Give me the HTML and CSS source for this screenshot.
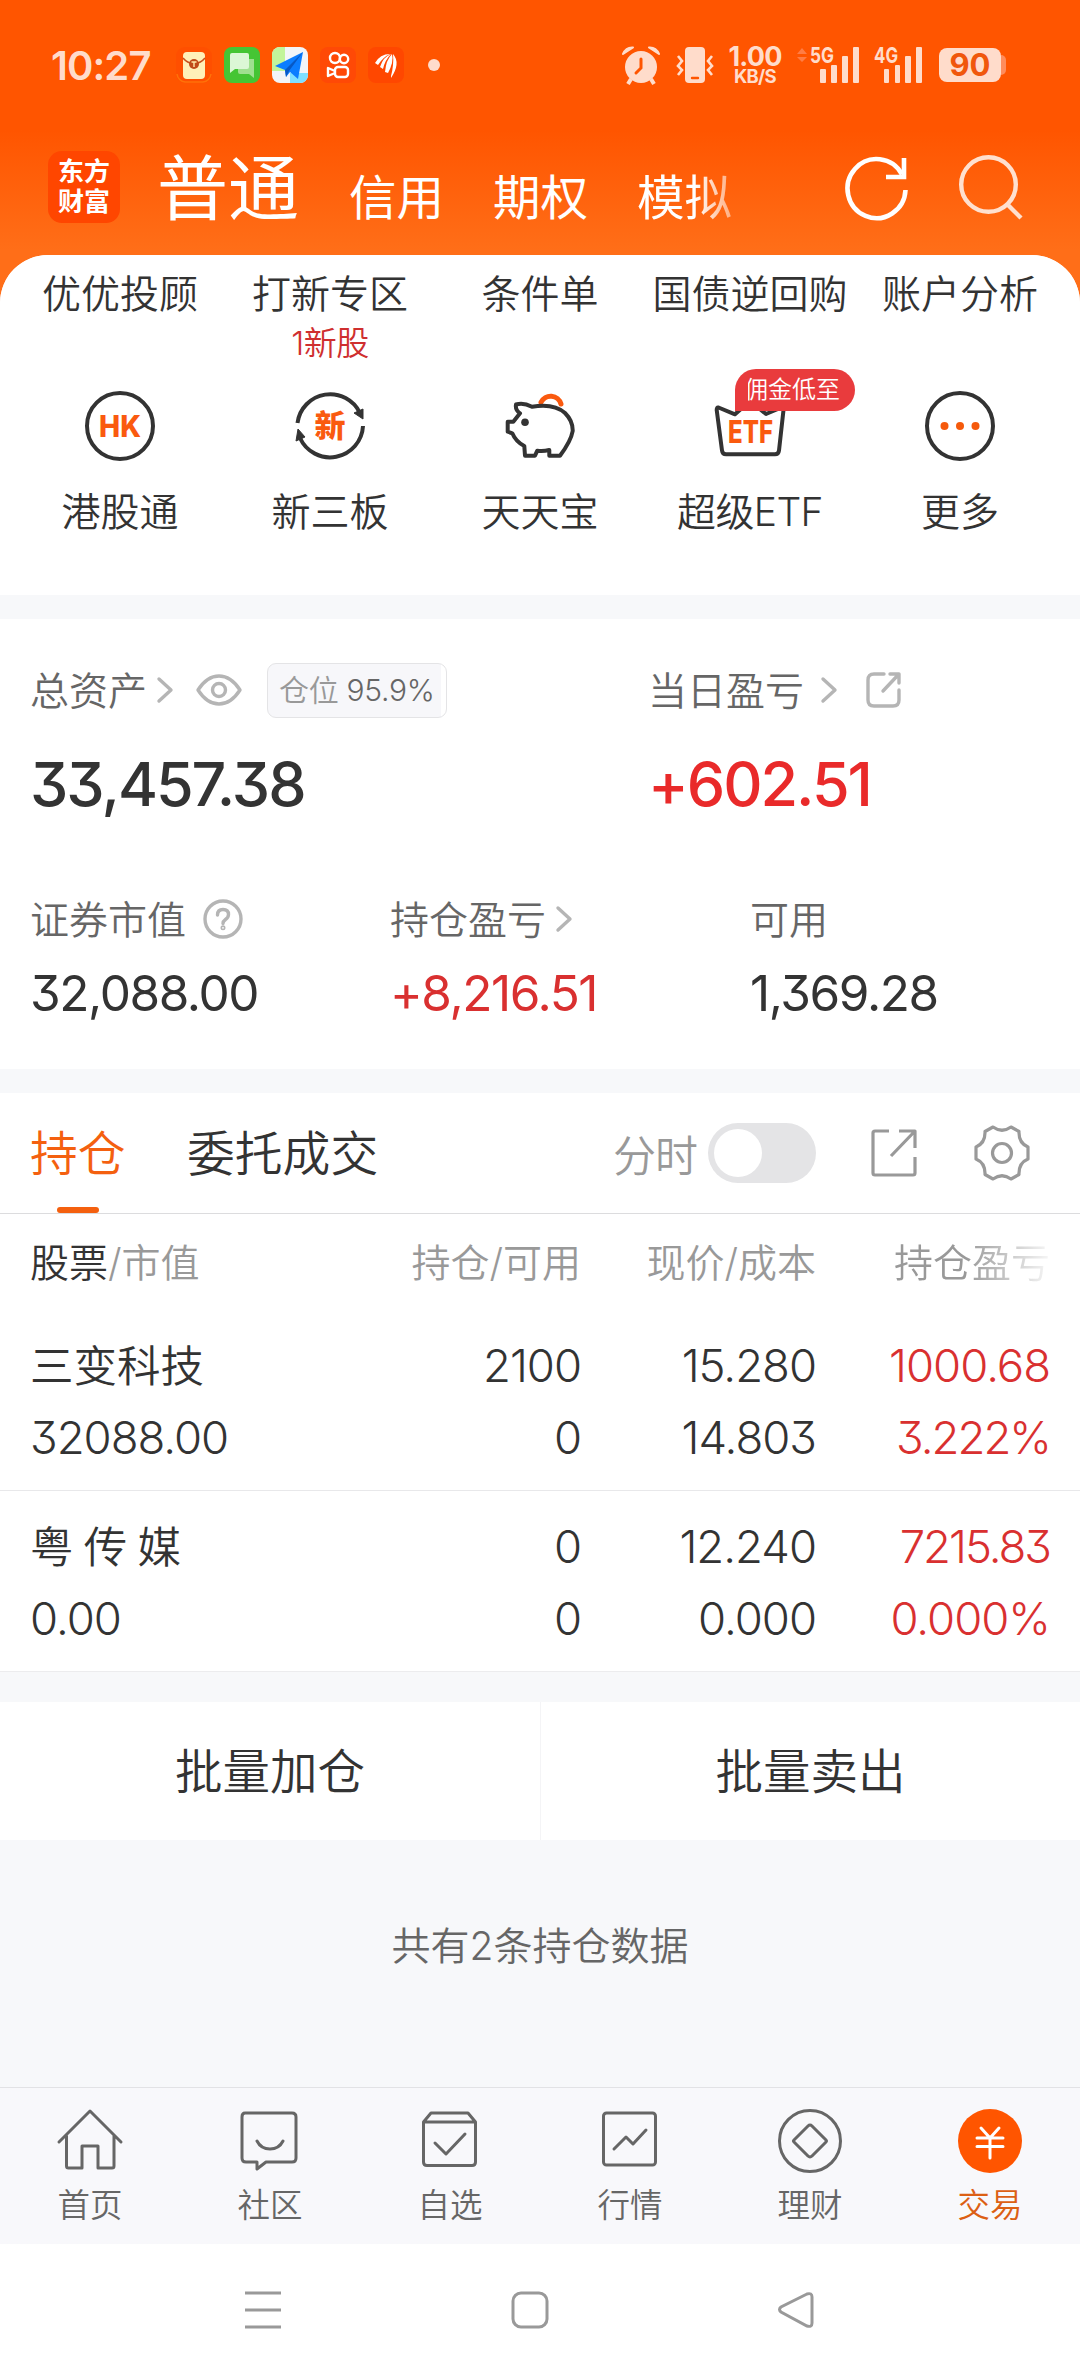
FILE: index.html
```html
<!DOCTYPE html>
<html lang="zh-CN">
<head>
<meta charset="utf-8">
<title>交易</title>
<link rel="stylesheet" href="styles.css">
</head>
<body>
<div class="screen">
  <header class="top">
    <div class="status">
      <span class="clock">10:27</span>
      <div class="apps">
        <svg width="36" height="36" viewBox="0 0 36 36"><rect width="36" height="36" rx="9" fill="#ff4f00"/><path d="M1 27a9 9 0 0 0 8 8h18a9 9 0 0 0 8-8" fill="none" stroke="#ff7208" stroke-width="1.5"/><rect x="7" y="5" width="22" height="27" rx="4" fill="#fff0b8"/><path d="M7 11q4 5 11 6 7-1 11-6" fill="none" stroke="#c8501c" stroke-width="1.5"/><circle cx="18" cy="17" r="5" fill="#c04a18"/><path d="M15.5 15h5M18 15v5" stroke="#ffe9a8" stroke-width="1.4"/></svg>
        <svg width="36" height="36" viewBox="0 0 36 36"><rect width="36" height="36" rx="8" fill="#45c534"/><path d="M14 12h16v19l-5-4H16q-2 0-2-2z" fill="#9fe08f"/><path d="M8 6h15q2 0 2 2v12q0 2-2 2H11l-5 4V8q0-2 2-2z" fill="#dcf7d6"/></svg>
        <svg width="36" height="36" viewBox="0 0 36 36"><rect width="36" height="36" rx="8" fill="#f2f5f8"/><path d="M8 0h5v24H0V8a8 8 0 0 1 8-8z" fill="#c2f59b"/><path d="M18 26h18v2a8 8 0 0 1-8 8H18z" fill="#7fe0ff"/><path d="M31 5 3 19l10 4 1 7 4-5 8 7z" fill="#0b7dff"/><path d="M31 5 13 23l1 7 3-6z" fill="#0758c4"/></svg>
        <svg width="36" height="36" viewBox="0 0 36 36"><rect width="36" height="36" rx="8" fill="#ff4906"/><g fill="none" stroke="#fff" stroke-width="2.4" stroke-linejoin="round"><circle cx="15" cy="11" r="5"/><circle cx="24" cy="12" r="4.2"/><rect x="15" y="20" width="13" height="10" rx="3"/><path d="M15 24l-7-3v8l7-3"/></g></svg>
        <svg width="36" height="36" viewBox="0 0 36 36"><rect width="36" height="36" rx="8" fill="#ff4700"/><g fill="#fff"><path d="M7 16q5-9 15-9-7 3-12 11z"/><path d="M12 20q3-10 11-13-6 6-8 15z"/><path d="M17 25q1-12 7-18 2 8-4 19z"/><path d="M23 29q3-11 2-22 8 9-2 24z"/></g></svg>
      </div>
      <span class="dot"></span>
      <div class="signals">
        <svg width="38" height="38" viewBox="0 0 38 38"><g fill="#ffdccb"><circle cx="19" cy="21" r="16"/><path d="M1 8Q4 1 11 1.500z M37 8Q34 1 27 1.500z" stroke="#ffdccb" stroke-width="2" stroke-linejoin="round"/><path d="M9 33l-3 5M29 33l3 5" stroke="#ffdccb" stroke-width="4"/></g><path d="M19 13v9l-5 5" fill="none" stroke="#ff5500" stroke-width="3" stroke-linecap="round"/></svg>
        <svg class="vibrate" width="38" height="38" viewBox="0 0 38 38"><rect x="9" y="1" width="20" height="36" rx="4" fill="#ffdccb"/><path d="M16 32h6" stroke="#ff5500" stroke-width="2.4" stroke-linecap="round"/><path d="M2 10l4 5-4 5 4 4-4 5M36 10l-4 5 4 5-4 4 4 5" fill="none" stroke="#ffdccb" stroke-width="2.6"/></svg>
        <div class="speed"><b>1.00</b><i>KB/S</i></div>
        <svg class="sig5" width="62" height="38" viewBox="0 0 62 38"><path d="M0 8l5-6 5 6zM0 11h10l-5 5z" fill="#ff7d45"/><text x="13" y="17" textLength="24" lengthAdjust="spacingAndGlyphs" class="net">5G</text><g fill="#ffdccb"><rect x="23" y="23" width="6" height="14" rx="1"/><rect x="34" y="19" width="6" height="18" rx="1"/><rect x="45" y="10" width="6" height="27" rx="1"/><rect x="56" y="1" width="6" height="36" rx="1"/></g></svg>
        <svg class="sig4" width="48" height="38" viewBox="0 0 48 38"><text x="0" y="17" textLength="24" lengthAdjust="spacingAndGlyphs" class="net">4G</text><g fill="#ffdccb"><rect x="10" y="23" width="5" height="14" rx="1"/><rect x="21" y="19" width="5" height="18" rx="1"/><rect x="31" y="10" width="6" height="27" rx="1"/><rect x="42" y="1" width="6" height="36" rx="1"/></g></svg>
        <div class="battery">90</div>
      </div>
    </div>
    <div class="accounts">
      <div class="logo"><span>东方</span><span>财富</span></div>
      <span class="acct acct-main">普通</span>
      <span class="acct">信用</span>
      <span class="acct">期权</span>
      <span class="acct acct-fade">模拟</span>
      <svg class="refresh" width="64" height="66" viewBox="0 0 64 66" fill="none" stroke="#fff" stroke-width="4.6"><path d="M60.500 35A29 29.500 0 1 1 57 19.500"/><path d="M59 3v19H41" /></svg>
      <svg class="search" width="64" height="66" viewBox="0 0 64 66" fill="none" stroke="#ffe0cf" stroke-width="4.400"><circle cx="29.500" cy="29.500" r="27.300"/><path d="M48 49l14 14"/></svg>
    </div>
  </header>

  <main class="sheet">
    <section class="tools">
      <div class="tool-label">优优投顾</div><div class="tool-label">打新专区<small>1新股</small></div><div class="tool-label">条件单</div><div class="tool-label">国债逆回购</div><div class="tool-label">账户分析</div>
      <div class="tool"><svg width="72" height="72" viewBox="0 0 72 72"><circle cx="36" cy="36" r="33" class="ink"/><text x="36" y="46.500" textLength="42" lengthAdjust="spacingAndGlyphs" class="glyph" font-size="30">HK</text></svg><span>港股通</span></div>
      <div class="tool"><svg width="72" height="72" viewBox="0 0 72 72"><g class="ink"><path d="M3.500 33A33 33 0 0 1 66 23"/><path d="M69 36A33 33 0 0 1 6 48"/></g><path d="M60 23l9-4v10zM2 51l2-12 7 8z" fill="#333" stroke="#333"/><text x="36" y="47" class="glyph cjk" font-size="31">新</text></svg><span>新三板</span></div>
      <div class="tool"><svg width="72" height="72" viewBox="-1 -1 72 72"><path d="M36 11.300A10.700 10.700 0 0 1 56 13" fill="none" stroke="#fa5a0f" stroke-width="5" stroke-linecap="round"/><path class="ink" d="M11 13.500Q18 11 27 15.700Q49 12 60 22Q68 30 67.700 40Q66 50 55 64.700H44.300V59Q38 60.500 32.300 59.700L30 64.700H20L19.300 55Q11 51 7.300 42.300L2.700 40.700V30.700H8.300L15 22.300Q10 19 11 13.500Z"/><circle cx="20" cy="31.300" r="3.800" fill="#333"/></svg><span>天天宝</span></div>
      <div class="tool"><svg width="72" height="72" viewBox="-1 -1 72 72"><path class="ink" d="M3.500 16.500L20 23.300 35 10 51 23 66.500 16.500Q69 16.500 68.500 19L64 59.500Q63.500 63.300 60 63.300H11Q7.500 63.300 7 59.500L1.700 19Q1.700 16 3.500 16.500Z"/><text x="35.500" y="51.500" textLength="45" lengthAdjust="spacingAndGlyphs" class="glyph" font-size="31">ETF</text></svg><span class="latin">超级ETF</span><em class="promo"><b>佣金低至</b></em></div>
      <div class="tool"><svg width="72" height="72" viewBox="0 0 72 72"><circle cx="36" cy="36" r="33" class="ink"/><g fill="#f55a0c"><circle cx="20.500" cy="36" r="4"/><circle cx="36" cy="36" r="4"/><circle cx="51.500" cy="36" r="4"/></g></svg><span>更多</span></div>
    </section>

    <section class="assets">
      <div class="asset-main">
        <div class="caption">总资产<svg class="chev" width="16" height="26" viewBox="0 0 16 26"><path d="M2 2l12 11L2 24"/></svg><svg class="eye" width="46" height="32" viewBox="0 0 46 32"><path d="M2 16Q11 2 23 2t21 14Q35 30 23 30T2 16Z"/><circle cx="23" cy="16" r="6.500"/></svg><span class="ratio">仓位 <b>95.9%</b></span></div>
        <div class="caption">当日盈亏<svg class="chev chev-far" width="16" height="26" viewBox="0 0 16 26"><path d="M2 2l12 11L2 24"/></svg><svg class="out" width="36" height="36" viewBox="0 0 36 36"><path d="M18 2H8Q2 2 2 8v20q0 6 6 6h19q6 0 6-6V18M24 2h9v9M33 2 17 19"/></svg></div>
        <div class="total">33,457.38</div>
        <div class="total total-day red">+602.51</div>
      </div>
      <div class="asset-sub">
        <div class="caption">证券市值<svg class="help" width="40" height="40" viewBox="0 0 40 40"><circle cx="20" cy="20" r="18"/><path d="M14.500 16q0-5.500 5.500-5.500t5.500 5q0 3-3 5-2.500 1.800-2.500 4"/><circle cx="20" cy="28.800" r=".8"/></svg></div>
        <div class="caption">持仓盈亏<svg class="chev" width="16" height="26" viewBox="0 0 16 26"><path d="M2 2l12 11L2 24"/></svg></div>
        <div class="caption">可用</div>
        <div class="amount">32,088.00</div>
        <div class="amount red">+8,216.51</div>
        <div class="amount">1,369.28</div>
      </div>
    </section>

    <section class="holdings">
      <div class="tabs">
        <span class="tab tab-on">持仓</span><span class="tab">委托成交</span>
        <span class="switch-label">分时</span><span class="switch"></span>
        <svg class="open" width="46" height="48" viewBox="0 0 46 48"><path d="M18 2H4Q2 2 2 4v40q0 2 2 2h38q2 0 2-2V28M28 2h16v17M44 2 20 27"/></svg>
        <svg class="gear" width="56" height="56" viewBox="0 0 56 56"><path d="M19 2Q28 8.500 37 2L45 6.500Q44.500 18 54 22V34Q44.500 38 45 49.500L37 54Q28 47.500 19 54L11 49.500Q11.500 38 2 34V22Q11.500 18 11 6.500Z"/><circle cx="28" cy="28" r="9.500"/></svg>
      </div>
      <div class="row head"><div><b>股票</b>/市值</div><div>持仓/可用</div><div>现价/成本</div><div class="head-fade">持仓盈亏</div></div>
      <div class="row stock"><div class="name">三变科技</div><div>2100</div><div>15.280</div><div class="red">1000.68</div><div>32088.00</div><div>0</div><div>14.803</div><div class="red tight">3.222%</div></div>
      <div class="row stock"><div class="name">粤 传 媒</div><div>0</div><div>12.240</div><div class="red tight">7215.83</div><div>0.00</div><div>0</div><div>0.000</div><div class="red">0.000%</div></div>
    </section>

    <section class="batch"><button>批量加仓</button><button>批量卖出</button></section>
    <p class="count">共有2条持仓数据</p>
  </main>

  <nav class="nav">
    <a><svg width="66" height="66" viewBox="0 0 66 66"><path d="M2 34 33 3l31 31M9.500 28v30q0 2 2 2H25V38h16v22h14q2 0 2-2V28"/></svg>首页</a>
    <a><svg width="66" height="66" viewBox="0 0 66 66"><path d="M8 5h47q4 0 4 4v41q0 4-4 4H29l-9 7v-7H9q-4 0-4-4V9q0-4 3-4zM20 33q4 8 13 8t13-8"/></svg>社区</a>
    <a><svg width="66" height="66" viewBox="0 0 66 66"><path d="M6.500 14v40q0 3.500 3.500 3.500h45q3.500 0 3.500-3.500V14L51 5H14ZM6.500 14h52M18 35l11 11 19-20"/></svg>自选</a>
    <a><svg width="66" height="66" viewBox="0 0 66 66"><rect x="6.500" y="5" width="52" height="52" rx="3"/><path d="M17 41l12-12 7 7 13-14"/></svg>行情</a>
    <a><svg width="66" height="66" viewBox="0 0 66 66"><circle cx="33" cy="33" r="30.500"/><path d="M31 18q2-2 4 0l14 14q1 1 0 2L35 48q-2 2-4 0L17 34q-1-1 0-2z"/></svg>理财</a>
    <a class="nav-on"><svg width="66" height="66" viewBox="0 0 66 66"><circle cx="33" cy="33" r="32" fill="#ff5500" stroke="none"/><path d="M24 20l9 10 9-10M20 30h26M20 38.500h26M33 29v21" stroke="#fff"/></svg>交易</a>
  </nav>
  <footer class="system">
    <svg width="36" height="38" viewBox="0 0 36 38"><path d="M0 2h36M0 19h36M0 36h36"/></svg>
    <svg width="38" height="38" viewBox="0 0 38 38"><rect x="2" y="2" width="34" height="34" rx="8"/></svg>
    <svg width="36" height="38" viewBox="0 0 36 38"><path d="M29 3 3 16q-3 2.500 0 5L29 35q5 1.500 5-3V6q0-4.500-5-3z"/></svg>
  </footer>
</div>
</body>
</html>
```
FILE: styles.css
```css
* { box-sizing: border-box; }
body {
  margin: 0;
  width: 1080px;
  background: #f7f8fa;
  color: #333;
  font-family: Inter, "Noto Sans CJK SC", sans-serif;
  font-feature-settings: "cv09";
  font-weight: 350;
}
b, i, em { font-style: normal; font-weight: inherit; }
svg { display: block; flex: none; overflow: visible; }
.screen { height: 2376px; display: flex; flex-direction: column; overflow: hidden; }
.red { color: #d93030; }

/* header */
.top { height: 305px; margin-bottom: -50px; background: linear-gradient(#ff5500 130px, #ff6e18 250px); color: #fff; }
.status { height: 130px; padding: 0 74px 0 51px; display: flex; align-items: center; color: #ffdccb; }
.clock { width: 125px; font-size: 40px; font-weight: 600; letter-spacing: -0.9px; white-space: nowrap; }
.apps { display: flex; gap: 12px; }
.dot { width: 12px; height: 12px; margin-left: 24px; border-radius: 50%; background: #ffdccb; }
.signals { margin-left: auto; display: flex; align-items: center; }
.vibrate { margin-left: 16px; }
.speed { width: 56px; margin-left: 13px; display: flex; flex-direction: column; align-items: center; font-weight: 700; }
.speed b { font-size: 27px; line-height: 21px; letter-spacing: -0.8px; }
.speed i { font-size: 18.500px; line-height: 18px; letter-spacing: -0.7px; }
.net { font-size: 22px; font-weight: 700; fill: #ffdccb; }
.sig5 { margin-left: 14px; }
.sig4 { margin-left: 15px; }
.battery { width: 62px; height: 34px; margin: 0 5px 0 17px; position: relative; border-radius: 8px; background: #ffdccb; color: #f0570c; font-size: 31px; font-weight: 700; line-height: 34px; text-align: center; }
.battery::after { content: ""; position: absolute; right: -5px; top: 7px; width: 5px; height: 20px; border-radius: 0 5px 5px 0; background: #ff8c5c; }

.accounts { height: 120px; padding: 21px 0 0 48px; display: flex; }
.logo { width: 72px; height: 72px; border-radius: 14px; background: #ff4600; display: flex; flex-direction: column; justify-content: center; font-size: 26px; font-weight: 700; line-height: 30px; text-align: center; }
.acct { margin: 23px 0 0 48px; width: 96px; font-size: 47.500px; line-height: 48px; font-weight: 400; white-space: nowrap; }
.acct-main { margin: 0 0 0 37px; width: 144px; font-size: 71px; line-height: 74px; }
.acct + .acct { width: 96px; }
.acct-fade { -webkit-mask-image: linear-gradient(90deg, #000 60%, rgba(0,0,0,.45) 100%); mask-image: linear-gradient(90deg, #000 60%, rgba(0,0,0,.45) 100%); }
.refresh { margin: 4px 0 0 112px; }
.search { margin: 4px 0 0 50px; }

/* shortcut grid */
.sheet { flex: 1; border-radius: 48px 48px 0 0; overflow: hidden; background: #f7f8fa; position: relative; }
.tools { height: 340px; padding: 15px 15px 0; display: grid; grid-template-columns: repeat(5, 210px); grid-template-rows: 115px auto; background: #fff; font-size: 39px; line-height: 48px; text-align: center; white-space: nowrap; }
.tool-label small { display: block; margin-top: 4px; font-size: 33px; line-height: 42px; letter-spacing: -0.5px; color: #cf2f2f; }
.tool { position: relative; display: flex; flex-direction: column; align-items: center; padding-top: 5px; }
.tool span { margin-top: 26px; }
.tool .latin { letter-spacing: -0.6px; }
.ink { fill: none; stroke: #333; stroke-width: 4; stroke-linejoin: round; }
.glyph { fill: #fa5a0f; font-weight: 800; text-anchor: middle; }
.cjk { font-family: "Noto Sans CJK SC", sans-serif; font-weight: 900; }
.promo { position: absolute; left: 90px; top: -16px; width: 120px; height: 42px; padding-left: 13px; border-radius: 21px 21px 21px 0; background: #e93b3d; color: #fff; font-size: 24px; line-height: 42px; text-align: left; }
.promo b { display: block; overflow: hidden; text-indent: -4px; }

/* assets */
.assets { height: 450px; margin-top: 24px; background: #fff; }
.asset-main, .asset-sub { display: grid; padding-left: 30px; white-space: nowrap; }
.asset-main { padding-top: 41px; grid-template-columns: 618px auto; grid-template-rows: 60px 128px; }
.asset-sub { padding-top: 41px; grid-template-columns: 360px 360px auto; grid-template-rows: 60px 88px; }
.caption { display: flex; align-items: center; padding-bottom: 4px; color: #666; font-size: 39px; }
.caption svg, .caption span { margin-top: 4px; }
.caption svg { fill: none; stroke: #b5b5b5; stroke-width: 3.4; stroke-linecap: round; stroke-linejoin: round; }
.chev { margin-left: 10px; }
.chev-far { margin-left: 17px; }
.eye { margin-left: 23px; }
.out { margin-left: 29px; }
.help { margin-left: 17px; }
.ratio { width: 180px; height: 55px; margin-left: 25px; padding-left: 11px; border: 1px solid #e4e4e6; border-radius: 9px; background: linear-gradient(90deg, #f7f7fa 173px, #fff 173px); color: #999; font-size: 30px; line-height: 53px; letter-spacing: -0.3px; }
.ratio b { color: #666; }
.total { font-size: 61px; line-height: 128px; font-weight: 500; letter-spacing: -2px; }
.total-day { color: #e92a2a; }
.amount { font-size: 49.500px; line-height: 88px; font-weight: 400; letter-spacing: -1.4px; }

/* holdings */
.holdings { margin-top: 24px; background: #fff; border-bottom: 1px solid #ececee; }
.tabs { height: 121px; padding-left: 30px; display: flex; align-items: center; border-bottom: 1px solid #dcdcde; white-space: nowrap; }
.tab { width: 196px; font-size: 47.800px; line-height: 117px; padding-top: 3px; }
.tab-on { width: 96px; margin-right: 61px; color: #f4600f; position: relative; }
.tab-on::after { content: ""; position: absolute; left: 27px; bottom: 0; width: 42px; height: 6px; border-radius: 3px; background: #f4600f; }
.switch-label { margin-left: 230px; width: 95px; font-size: 43px; letter-spacing: -1px; color: #999; }
.switch { width: 108px; height: 60px; padding: 6px; border-radius: 30px; background: #e4e4e6; }
.switch::before { content: ""; display: block; width: 48px; height: 48px; border-radius: 50%; background: #fff; }
.open, .gear { fill: none; stroke: #999; stroke-width: 3.2; stroke-linejoin: round; }
.open { margin-left: 55px; }
.gear { margin-left: 57px; }
.row { padding: 0 30px; display: grid; grid-template-columns: 326px 225px 235px 234px; white-space: nowrap; text-align: right; }
.row > :nth-child(4n+1) { text-align: left; }
.head { height: 96px; font-size: 39px; line-height: 98px; color: #999; }
.head b { color: #333; }
.head-fade { -webkit-mask-image: linear-gradient(90deg, #000 64%, rgba(0,0,0,.08) 100%); mask-image: linear-gradient(90deg, #000 64%, rgba(0,0,0,.08) 100%); }
.stock { height: 180px; padding-top: 20px; grid-template-rows: 72px 72px; font-size: 45.500px; line-height: 72px; letter-spacing: -1px; }
.stock + .stock { height: 181px; border-top: 1px solid #e8e8ea; }
.stock .name { font-size: 43.500px; letter-spacing: 0; word-spacing: -2px; }
.stock .tight { letter-spacing: -2px; }

.batch { height: 138px; margin-top: 30px; display: grid; grid-template-columns: 1fr 1fr; background: #fff; }
.batch button { border: 0; padding: 2px 0 0; background: none; color: #333; font: inherit; font-size: 47.500px; line-height: 136px; }
.batch button + button { border-left: 1px solid #f4f4f6; }
.count { margin: 76px 0 0; text-align: center; font-size: 39px; line-height: 60px; color: #666; }

/* bottom bars */
.nav { height: 157px; padding-top: 20px; display: grid; grid-template-columns: repeat(6, 1fr); border-top: 1px solid #e2e2e5; background: #f8f8fb; }
.nav a { display: flex; flex-direction: column; align-items: center; gap: 12px; font-size: 32.500px; line-height: 40px; color: #666; }
.nav svg { fill: none; stroke: #666; stroke-width: 3; stroke-linejoin: round; stroke-linecap: round; }
.nav .nav-on { color: #dc5f14; }
.system { height: 132px; padding: 0 266px 0 245px; display: flex; align-items: center; justify-content: space-between; background: #fff; }
.system svg { fill: none; stroke: #999; stroke-width: 3; }
```
